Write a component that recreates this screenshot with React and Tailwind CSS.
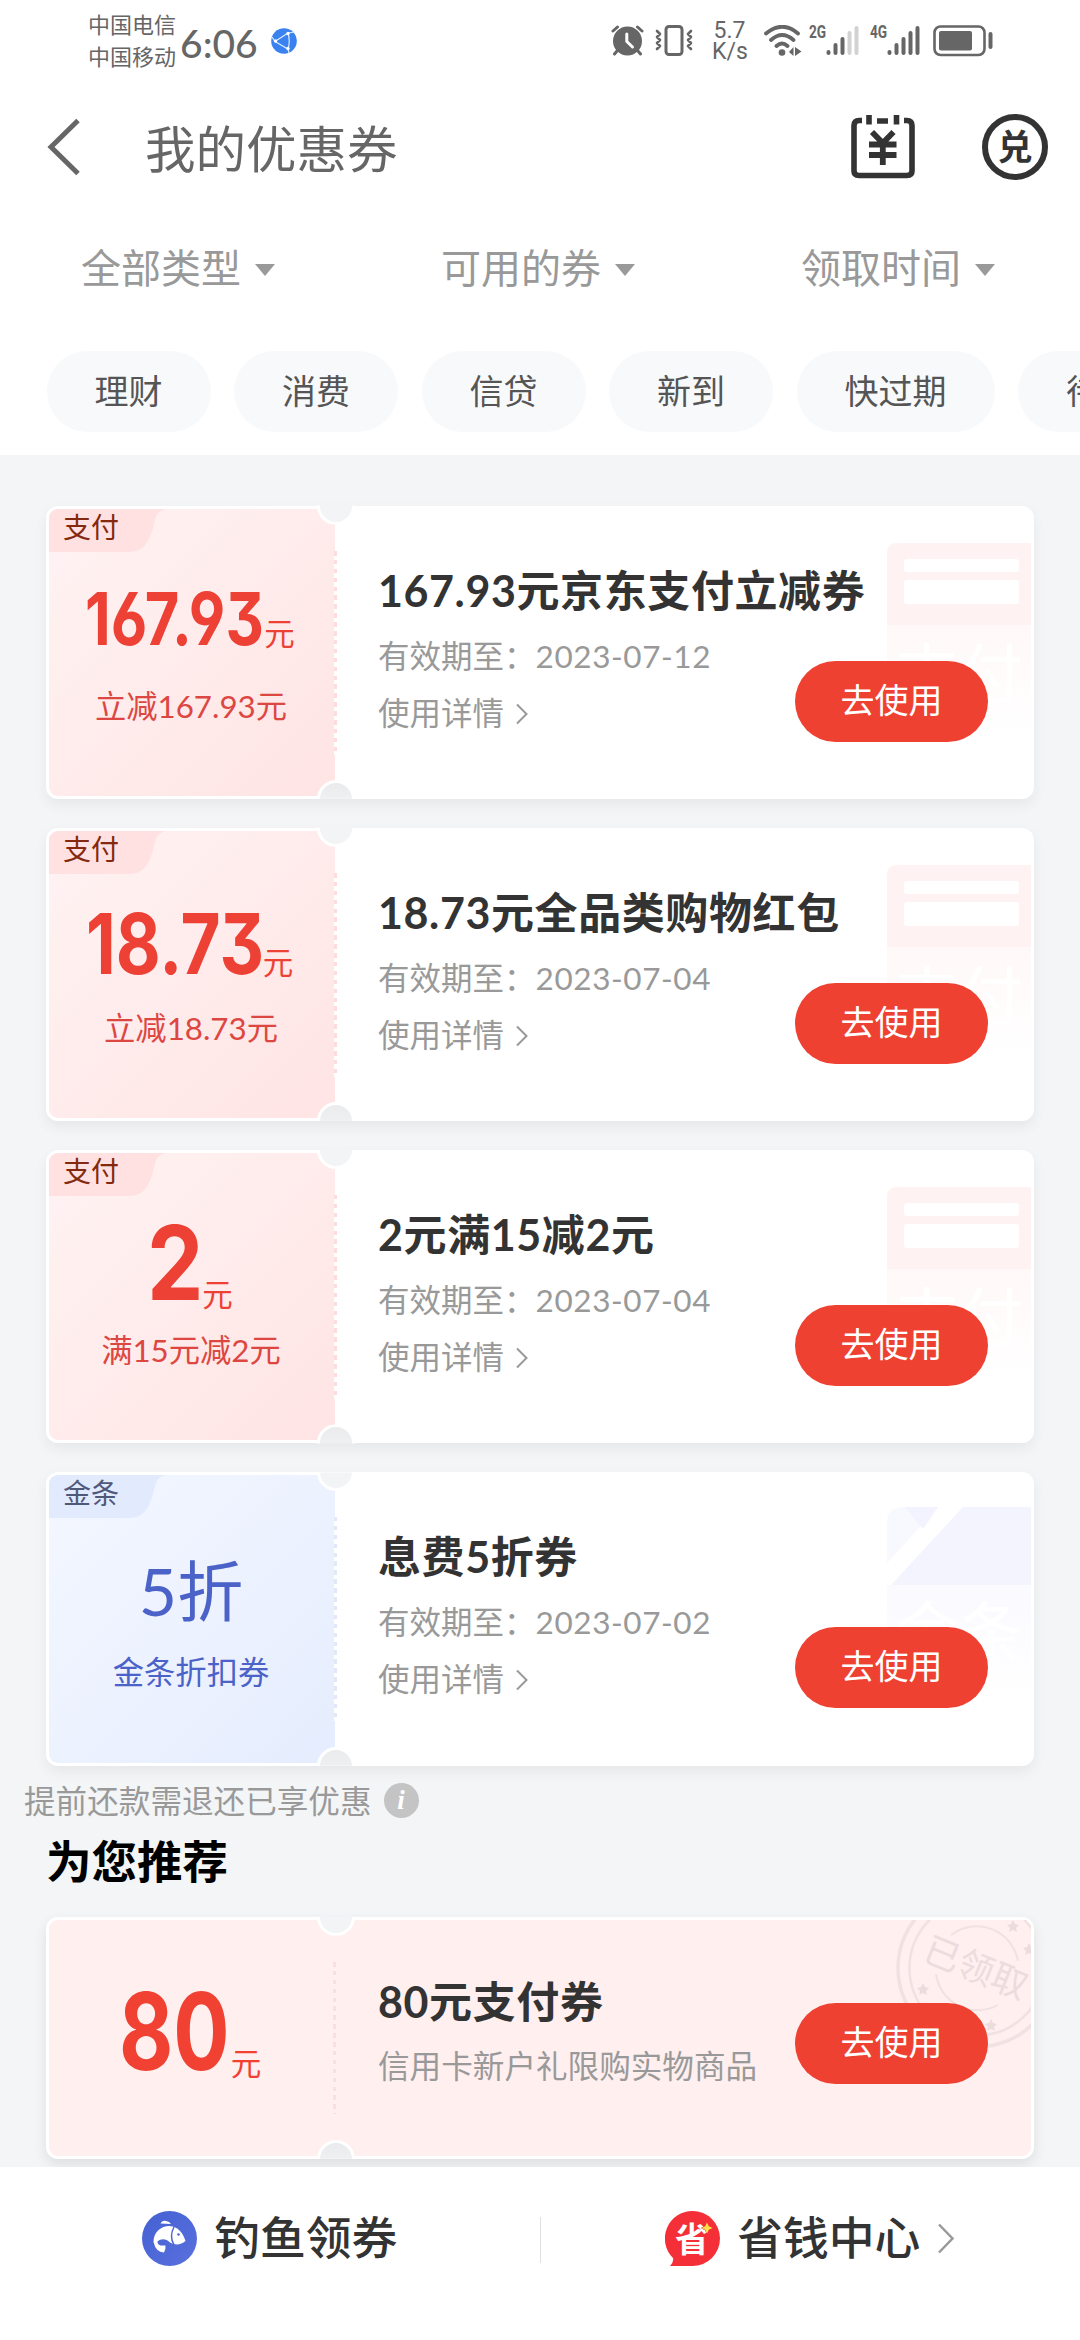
const filters = ['全部类型', '可用的券', '领取时间']

const chips = ['理财', '消费', '信贷', '新到', '快过期', '待生效']

const coupons = [
  {
    type: 'pay',
    tag: '支付',
    amount: '167.93',
    amountBox: 'w-[177px] text-[73px]',
    amountScale: '-ml-[2px] scale-x-[0.815]',
    rowPad: 'pt-[73px]',
    unitShift: '',
    desc: '立减167.93元',
    title: '167.93元京东支付立减券',
    date: '2023-07-12',
  },
  {
    type: 'pay',
    tag: '支付',
    amount: '18.73',
    amountBox: 'w-[174px] text-[84px]',
    amountScale: '-ml-[3px] scale-x-[0.822]',
    rowPad: 'pt-[71px]',
    unitShift: '',
    desc: '立减18.73元',
    title: '18.73元全品类购物红包',
    date: '2023-07-04',
  },
  {
    type: 'pay',
    tag: '支付',
    amount: '2',
    amountBox: 'w-[53px] text-[103px]',
    amountScale: '-ml-[2px] scale-x-[0.87]',
    rowPad: 'pt-[58px]',
    unitShift: 'translate-y-[6px]',
    desc: '满15元减2元',
    title: '2元满15减2元',
    date: '2023-07-04',
  },
  {
    type: 'gold',
    tag: '金条',
    discount: '5折',
    desc: '金条折扣券',
    title: '息费5折券',
    date: '2023-07-02',
  },
]

function SignalBars({ level }) {
  const tops = [50, 43, 37, 31, 26]
  return (
    <svg width="33" height="31" viewBox="0 25 33 31" fill="none" strokeWidth="4" strokeLinecap="round">
      {tops.map((y, i) => (
        <path key={i} d={`M${2.5 + i * 7} ${y + 2}V53`} stroke={i < level ? '#666' : '#d2d2d2'} />
      ))}
    </svg>
  )
}

function StatusBar() {
  return (
    <div className="flex h-[82px] justify-between pl-[88px] pr-[86px] text-[#666]">
      <div className="flex">
        <div className="pt-[9px] text-[22px] leading-[32px]">
          <p>中国电信</p>
          <p>中国移动</p>
        </div>
        <span className="ml-[4px] w-[78px] pt-[18px] text-[39px] font-medium leading-[50px]">6:06</span>
        <svg className="ml-[13px] mt-[28px]" width="26" height="26" viewBox="0 0 26 26">
          <circle cx="13" cy="13" r="12.8" fill="#3a82f0" />
          <path d="M17 5L4 13.5L17 21Q19.5 13 17 5ZM17 5L24 4M17 21L18 25M4 13.5L1 9" stroke="#d9ecff" strokeWidth="1.2" fill="none" />
          <circle cx="17" cy="5.5" r="1.7" fill="#fff" />
          <circle cx="4.5" cy="13" r="1.7" fill="#fff" />
          <circle cx="17" cy="20.5" r="1.7" fill="#fff" />
        </svg>
      </div>

      <div className="flex items-start pt-[25px]">
        <svg width="33" height="31" viewBox="0 0 33 31" fill="none" stroke="#666" strokeLinecap="round">
          <circle cx="16.5" cy="16" r="14.5" fill="#666" stroke="none" />
          <path d="M2 6L6.5 2M31 6L26.5 2M6 26L3.5 29M27 26L29.5 29" strokeWidth="3" />
          <path d="M15.8 9V16.5L21.5 22" stroke="#fff" strokeWidth="3" strokeLinejoin="round" />
        </svg>
        <svg className="ml-[11px]" width="38" height="31" viewBox="0 0 38 31" fill="none" stroke="#666" strokeLinecap="round" strokeLinejoin="round">
          <rect x="11" y="1.5" width="16" height="28" rx="3" strokeWidth="3" />
          <path d="M2 6L5 9L2 12L5 15L2 18L5 21L2 24M36 6L33 9L36 12L33 15L36 18L33 21L36 24" strokeWidth="2.6" />
        </svg>
        <div className="ml-[19px] mt-[-5px] w-[35px] text-center font-['Roboto'] text-[23px] leading-[21px]">
          <p>5.7</p>
          <p>K/s</p>
        </div>
        <svg className="ml-[17px]" width="39" height="31" viewBox="0 0 39 31" fill="none" stroke="#666" strokeWidth="3.8" strokeLinecap="round">
          <path d="M2 8.5Q18.5 -5 34 8.5M7 15Q18 5 29.5 15M12.5 21Q18 16 23.5 21" />
          <circle cx="18" cy="27.5" r="3.3" fill="#666" stroke="none" />
          <path d="M25 27L29.5 22V31ZM31 22V31L37.5 26.5Z" fill="#666" stroke="none" />
        </svg>
        <span className="ml-[6px] w-[17px] origin-left scale-x-[0.72] font-['Roboto'] text-[19px] font-bold leading-[14px]">2G</span>
        <SignalBars level={3} />
        <span className="ml-[11px] w-[17px] origin-left scale-x-[0.72] font-['Roboto'] text-[19px] font-bold leading-[14px]">4G</span>
        <SignalBars level={5} />
        <svg className="ml-[13px]" width="61" height="32" viewBox="0 0 61 32">
          <rect x="1.5" y="1.5" width="50" height="28.5" rx="6" fill="none" stroke="#666" strokeWidth="2.6" />
          <rect x="6" y="6" width="33" height="19.5" rx="2" fill="#666" />
          <rect x="55.5" y="7" width="4" height="17" rx="2" fill="#666" />
        </svg>
      </div>
    </div>
  )
}

function TitleBar() {
  return (
    <div className="flex h-[130px] items-center pl-[47px] pr-[32px]">
      <svg width="34" height="58" viewBox="0 0 34 58" fill="none" stroke="#666" strokeWidth="5">
        <path d="M31 2.5L4 29L31 55.5" />
      </svg>
      <h1 className="ml-[64px] mt-[3px] text-[50.5px] leading-[60px] text-[#666]">我的优惠券</h1>
      <svg className="ml-auto" width="64" height="66" viewBox="0 0 64 66" fill="none" stroke="#333" strokeWidth="5.6">
        <path d="M11 6.5H8Q3 6.5 3 11.5V57Q3 61.5 8 61.5H56Q61 61.5 61 57V11.5Q61 6.5 56 6.5H53M26 7H37" />
        <path d="M18 1V10.500M45.500 1V10.500" />
        <path d="M21 18L31.8 29L42.5 18M31.8 28V51M18 30.5H45.5M18 41H45.5" strokeWidth="5.8" />
      </svg>
      <div className="ml-[67px] flex h-[66px] w-[66px] items-center justify-center rounded-full border-[6px] border-[#333] pb-[2px] text-[35px] font-bold leading-none text-[#333]">
        兑
      </div>
    </div>
  )
}

function Watermark({ type }) {
  if (type === 'gold') {
    return (
      <svg className="absolute right-0 top-[32px]" width="144" height="190" viewBox="0 0 144 190">
        <defs>
          <linearGradient id="goldFade" x1="0" y1="0" x2="0" y2="1">
            <stop offset="0" stopColor="#fafaff" />
            <stop offset="1" stopColor="#ffffff" />
          </linearGradient>
        </defs>
        <path d="M0 78H144V190H0Z" fill="url(#goldFade)" />
        <path d="M76 0H144V78H4Z" fill="#f3f4fe" />
        <path d="M0 56V16Q0 0 18 0H51Z" fill="#f8f9ff" />
        <path d="M18 0H51L36 22Z" fill="#f2f3fe" />
        <text x="8" y="148" fontSize="64" fill="#fff">金条</text>
      </svg>
    )
  }
  return (
    <svg className="absolute right-0 top-[34px]" width="144" height="190" viewBox="0 0 144 190">
      <defs>
        <linearGradient id="payFade" x1="0" y1="0" x2="0" y2="1">
          <stop offset="0" stopColor="#fff8f8" />
          <stop offset="1" stopColor="#ffffff" />
        </linearGradient>
      </defs>
      <path d="M0 82H144V190H0Z" fill="url(#payFade)" />
      <path d="M0 82V10Q0 0 10 0H144V82Z" fill="#fff2f2" />
      <rect x="17" y="16" width="115" height="13" rx="3" fill="#fff" />
      <rect x="17" y="37" width="115" height="24" rx="3" fill="#fff" />
      <text x="8" y="154" fontSize="64" fill="#fff">支付</text>
    </svg>
  )
}

// Half circles cut out of the top and bottom edges where the ticket tears
function Notches() {
  return (
    <>
      <div className="absolute left-[268px] top-[-22px] h-[38px] w-[38px] rounded-full border-[3px] border-white bg-[#f2f4f6] [clip-path:inset(19px_0_0_0)]" />
      <div className="absolute bottom-[-22px] left-[268px] h-[38px] w-[38px] rounded-full border-[3px] border-white bg-linear-to-b from-[#e9ebec] to-[#f3f5f7] [clip-path:inset(0_0_19px_0)]" />
    </>
  )
}

function UseButton() {
  return (
    <button className="relative h-[81px] w-[193px] shrink-0 rounded-full bg-[#ef4132] pb-[3px] text-[34px] leading-none text-white">
      去使用
    </button>
  )
}

function Amount({ value, box, scale, unitShift }) {
  return (
    <>
      <span className={`inline-block whitespace-nowrap text-left font-['Inter'] font-bold leading-none [font-feature-settings:'cv03','cv04','cv09'] ${box}`}>
        <span className={`inline-block origin-left ${scale}`}>{value}</span>
      </span>
      <span className={`text-[30.5px] leading-none ${unitShift}`}>元</span>
    </>
  )
}

function Coupon({ coupon }) {
  const gold = coupon.type === 'gold'
  return (
    <div className="relative flex h-[293.3px] rounded-[12px] border-[3px] border-white bg-white shadow-[0_6px_14px_rgba(0,0,0,0.06)]">
      <div
        className={`relative w-[286px] shrink-0 overflow-hidden rounded-l-[9px] bg-linear-to-br pr-[2px] text-center ${
          gold ? 'from-[#f4f7ff] to-[#e5edfe] text-[#4b62c8]' : 'from-[#fff3f3] to-[#ffe4e4] text-[#ee4135]'
        }`}
      >
        <svg className="absolute left-0 top-0" width="118" height="43" viewBox="0 0 118 43">
          <path d="M0 0H117C103 3 108 14 100 30Q94 43 80 43H0Z" fill={gold ? '#e2eafe' : '#ffe1e1'} />
        </svg>
        <span className={`absolute left-[14px] top-0 text-[28px] leading-[37px] ${gold ? 'text-[#50587a]' : 'text-[#84290f]'}`}>
          {coupon.tag}
        </span>
        {gold ? (
          <div className="h-[175px] pt-[76px] text-[66px] leading-[80px]">{coupon.discount}</div>
        ) : (
          <div className={`flex h-[175px] items-baseline justify-center ${coupon.rowPad}`}>
            <Amount value={coupon.amount} box={coupon.amountBox} scale={coupon.amountScale} unitShift={coupon.unitShift} />
          </div>
        )}
        <p className={`text-[31.3px] leading-[44px] ${gold ? '' : 'text-[#dd4742]'}`}>{coupon.desc}</p>
      </div>

      <div
        className={`absolute left-[285px] top-[42px] h-[204px] w-[3px] ${
          gold
            ? 'bg-[repeating-linear-gradient(#e1e8f6_0_4.5px,#fff_4.5px_8.9px)]'
            : 'bg-[repeating-linear-gradient(#fcdcdc_0_4.5px,#fff_4.5px_8.9px)]'
        }`}
      />

      <div className="relative flex-1 pl-[43px] pt-[52px]">
        <Watermark type={coupon.type} />
        <h3 className="relative text-[43px] font-bold leading-[60px] tracking-[0.6px] text-[#333]">{coupon.title}</h3>
        <div className="mt-[10px] flex pr-[43px]">
          <div className="flex-1 text-[31.5px] leading-[50px] text-[#999]">
            <p>
              有效期至：<span className="tracking-[0.6px]">{coupon.date}</span>
            </p>
            <p className="mt-[7px] flex items-center">
              使用详情
              <svg className="ml-[12px] mt-[2px]" width="12" height="22" viewBox="0 0 12 22" fill="none" stroke="#999" strokeWidth="2">
                <path d="M1 1.5L10.5 11L1 20.5" />
              </svg>
            </p>
          </div>
          <div className="pt-[30px]">
            <UseButton />
          </div>
        </div>
      </div>
      <Notches />
    </div>
  )
}

function Stamp() {
  return (
    <svg className="absolute right-0 top-0" width="136" height="134" viewBox="895 1920 136 134" fill="none" stroke="#f0e1e2">
      <circle cx="977" cy="1968" r="79" strokeWidth="3.5" />
      <circle cx="977" cy="1968" r="67.5" strokeWidth="2.5" />
      <path d="M951 1935A42 42 0 0 1 1018 1961M936 1974A42 42 0 0 0 998 2005" strokeWidth="2" />
      <path
        d="M923 1983l2 4 4 1-3 3 1 4-4-2-4 2 1-4-3-3 4-1ZM1013 1920l2 4 4 1-3 3 1 4-4-2-4 2 1-4-3-3 4-1ZM991 2019l2 4 4 1-3 3 1 4-4-2-4 2 1-4-3-3 4-1ZM1029 1943l2 4 4 1-3 3 1 4-4-2-4 2 1-4-3-3 4-1Z"
        fill="#ecdcde"
        stroke="none"
      />
      <text x="976" y="1981" transform="rotate(22 977 1968)" fontSize="36" textAnchor="middle" fill="#ecdcde" stroke="none">
        已领取
      </text>
    </svg>
  )
}

function RecommendCard() {
  return (
    <div className="relative flex h-[242px] shrink-0 rounded-[12px] border-[3px] border-white bg-[#ffefef] shadow-[0_6px_14px_rgba(0,0,0,0.09)]">
      <div className="flex w-[286px] items-baseline justify-center pt-[58px] text-[#f04133]">
        <Amount value="80" box="w-[108px] text-[107px]" scale="-ml-[4px] scale-x-[0.78]" unitShift="translate-y-[5px]" />
      </div>
      <div className="absolute left-[284px] top-[42px] h-[152px] w-[3px] bg-[repeating-linear-gradient(#fadfe0_0_4.5px,#ffefef_4.5px_8.9px)]" />
      <Stamp />
      <div className="flex flex-1 pl-[43px] pr-[43px]">
        <div className="flex-1 pt-[52px]">
          <h3 className="text-[43px] font-bold leading-[60px] tracking-[0.6px] text-[#333]">80元支付券</h3>
          <p className="mt-[9px] text-[31.6px] leading-[50px] text-[#999]">信用卡新户礼限购实物商品</p>
        </div>
        <div className="pt-[83px]">
          <UseButton />
        </div>
      </div>
      <Notches />
    </div>
  )
}

function FishIcon() {
  return (
    <svg width="55" height="55" viewBox="0 0 55 55">
      <defs>
        <linearGradient id="fishBg" x1="0" y1="0" x2="1" y2="1">
          <stop offset="0" stopColor="#4461d2" />
          <stop offset="1" stopColor="#5a70de" />
        </linearGradient>
      </defs>
      <circle cx="27.5" cy="27.5" r="27.5" fill="url(#fishBg)" />
      <path d="M18.5 12.5Q20 9 24 10Q27.500 10.500 29 13Z" fill="#fff" />
      <path d="M11.5 31C11.500 21 19 15 27.5 15C36 15.5 41 22 43.5 30C39 34 33 34.500 28 31.500C24 27.500 19 27.500 15.500 30.500C15.500 34 18 35 23.500 34.500Q24 38 22 41.500Q14 41.500 11.500 31Z" fill="#fff" />
      <path d="M32 16Q27 25 32 34" fill="none" stroke="#4d66d6" strokeWidth="1.5" />
      <circle cx="36.5" cy="23.5" r="1.3" fill="#4d66d6" />
    </svg>
  )
}

function SaveIcon() {
  return (
    <svg width="55" height="55" viewBox="0 0 55 55">
      <path d="M27.5 0A27.5 27.5 0 0 1 27.5 55H5Q9 51 8 47A27.5 27.5 0 0 1 27.5 0Z" fill="#f52f38" />
      <text x="27" y="41" fontSize="34" fontWeight="bold" textAnchor="middle" fill="#fff">省</text>
      <path d="M42 11.5L43.8 15.2L47.5 17L43.8 18.8L42 22.5L40.2 18.8L36.5 17L40.2 15.2Z" fill="#ffe04a" stroke="#f52f38" strokeWidth="1" paintOrder="stroke" />
    </svg>
  )
}

export default function App() {
  return (
    <div className="flex h-[2340px] w-[1080px] flex-col overflow-hidden bg-[#f3f5f7] font-['Lato','Noto_Sans_CJK_SC',sans-serif]">
      <header className="h-[455px] shrink-0 bg-white">
        <StatusBar />
        <TitleBar />
        <div className="grid h-[112px] grid-cols-3 pb-[1px]">
          {filters.map((label) => (
            <div key={label} className="flex items-center justify-center gap-[14px] pr-[4px] text-[40px] leading-[60px] text-[#999]">
              {label}
              <span className="mt-[4px] border-x-[10px] border-t-[12px] border-x-transparent border-t-[#999]" />
            </div>
          ))}
        </div>
        <div className="mt-[27px] flex gap-[23.5px] overflow-hidden pl-[46.5px]">
          {chips.map((chip) => (
            <span key={chip} className="h-[81px] shrink-0 rounded-full bg-[#f8f9fb] px-[48px] text-[34px] leading-[80px] text-[#555]">
              {chip}
            </span>
          ))}
        </div>
      </header>

      <main className="flex h-[1712px] shrink-0 flex-col overflow-hidden px-[46px] pt-[50.5px]">
        <div className="flex flex-col gap-[29px]">
          {coupons.map((coupon) => (
            <Coupon key={coupon.title} coupon={coupon} />
          ))}
        </div>
        <div className="-ml-[22px] mt-[10px] flex h-[50px] items-center text-[31.6px] leading-[50px] text-[#999]">
          提前还款需退还已享优惠
          <span className="ml-[12px] flex h-[35px] w-[35px] items-center justify-center rounded-full bg-[#c4c4c4] font-['Liberation_Serif'] text-[27px] font-bold italic leading-none text-white">
            i
          </span>
        </div>
        <h2 className="mb-[25px] mt-[6px] text-[45.5px] font-bold leading-[60px] text-black">为您推荐</h2>
        <RecommendCard />
      </main>

      <footer className="flex h-[173px] items-start bg-white pt-[43px] text-[45.8px] font-medium leading-[56px] text-[#333]">
        <div className="flex flex-1 items-center justify-center gap-[17px]">
          <FishIcon />
          钓鱼领券
        </div>
        <div className="mt-[7px] h-[46px] w-px bg-[#e0e0e0]" />
        <div className="flex flex-1 items-center justify-center gap-[17px]">
          <SaveIcon />
          省钱中心
          <svg width="18" height="31" viewBox="0 0 18 31" fill="none" stroke="#999" strokeWidth="2.5">
            <path d="M2 1.5L15.5 15.5L2 29.5" />
          </svg>
        </div>
      </footer>
    </div>
  )
}
